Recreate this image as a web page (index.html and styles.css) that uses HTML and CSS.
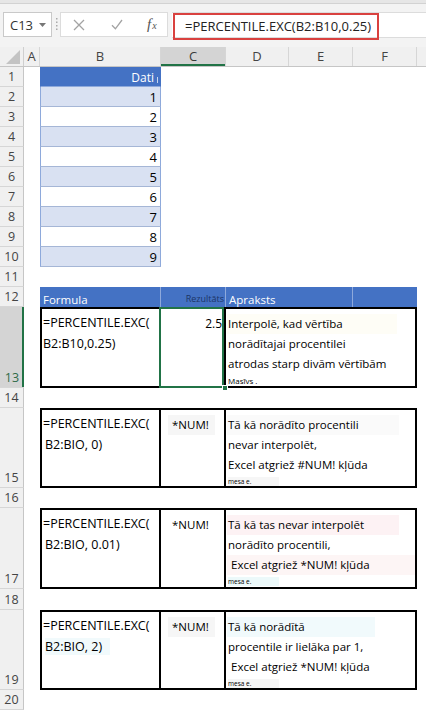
FILE: index.html
```html
<!DOCTYPE html>
<html lang="lv">
<head>
<meta charset="utf-8">
<title>PERCENTILE.EXC</title>
<link rel="stylesheet" href="styles.css">
</head>
<body>
<div class="app">
  <div class="topstrip"></div>
  <div class="fbar">
    <div class="namebox"><span>C13</span><svg class="caret" width="7" height="4" viewBox="0 0 7 4"><path d="M0 0H7L3.5 4Z" fill="#777"/></svg></div>
    <div class="grip"><svg width="3" height="13" viewBox="0 0 3 13"><rect x="1" y="0" width="1.5" height="1.5" fill="#aaa"/><rect x="1" y="3.5" width="1.5" height="1.5" fill="#aaa"/><rect x="1" y="7" width="1.5" height="1.5" fill="#aaa"/><rect x="1" y="10.5" width="1.5" height="1.5" fill="#aaa"/></svg></div>
    <div class="btns">
      <svg class="ico-x" width="12" height="12" viewBox="0 0 12 12"><path d="M1 1L11 11M11 1L1 11" stroke="#a3a3a3" stroke-width="1.3" fill="none"/></svg>
      <svg class="ico-ok" width="12" height="11" viewBox="0 0 12 11"><path d="M1 6.2L4.4 9.8L11 1" stroke="#a3a3a3" stroke-width="1.3" fill="none"/></svg>
      <span class="fx">f<span class="fxx">x</span></span>
    </div>
    <div class="formula"><div class="fbox">=PERCENTILE.EXC(B2:B10,0.25)</div></div>
  </div>

  <div class="sheet">
    <div class="colheads">
      <div class="corner"><svg width="14" height="14" viewBox="0 0 14 14"><path d="M14 0V14H0Z" fill="#c3c3c3"/></svg></div>
      <div class="ch cA">A</div>
      <div class="ch cB">B</div>
      <div class="ch cC sel">C</div>
      <div class="ch cD">D</div>
      <div class="ch cE">E</div>
      <div class="ch cF">F</div>
      <div class="ch cG"></div>
    </div>

    <div class="grid">
      <div class="rowheads">
        <div class="rh">1</div><div class="rh">2</div><div class="rh">3</div><div class="rh">4</div>
        <div class="rh">5</div><div class="rh">6</div><div class="rh">7</div><div class="rh">8</div>
        <div class="rh">9</div><div class="rh">10</div><div class="rh">11</div><div class="rh">12</div>
        <div class="rh h81 selrow">13</div>
        <div class="rh">14</div>
        <div class="rh h80">15</div>
        <div class="rh">16</div>
        <div class="rh h81">17</div>
        <div class="rh h21">18</div>
        <div class="rh h80">19</div>
        <div class="rh">20</div>
      </div>

      <div class="body">
        <div class="row"><div class="cellB head">Dati<span class="fmark"></span></div></div>
        <div class="row"><div class="cellB band">1</div></div>
        <div class="row"><div class="cellB">2</div></div>
        <div class="row"><div class="cellB band">3</div></div>
        <div class="row"><div class="cellB">4</div></div>
        <div class="row"><div class="cellB band">5</div></div>
        <div class="row"><div class="cellB">6</div></div>
        <div class="row"><div class="cellB band">7</div></div>
        <div class="row"><div class="cellB">8</div></div>
        <div class="row"><div class="cellB band">9</div></div>
        <div class="row"></div>
        <div class="row">
          <div class="th thB">Formula</div>
          <div class="th thC">Rezultāts</div>
          <div class="th thD">Apraksts</div>
          <div class="th thE"></div>
          <div class="th thF"></div>
        </div>

        <div class="rec h81">
          <div class="rb"><div>=PERCENTILE.EXC(</div><div>B2:B10,0.25)</div></div>
          <div class="rc selcell"><div class="val">2.5</div><span class="handle"></span></div>
          <div class="rd">
            <div class="ln hl-yel">Interpolē, kad vērtība</div>
            <div class="ln">norādītajai procentilei</div>
            <div class="ln">atrodas starp divām vērtībām</div>
            <div class="tiny t8">Masīvs .</div>
          </div>
        </div>
        <div class="row"></div>

        <div class="rec h80">
          <div class="rb"><div>=PERCENTILE.EXC(</div><div class="ind">B2:BIO, 0)</div></div>
          <div class="rc"><div class="num hl-grey">*NUM!</div></div>
          <div class="rd">
            <div class="ln hl-grey2">Tā kā norādīto procentili</div>
            <div class="ln">nevar interpolēt,</div>
            <div class="ln">Excel atgriež #NUM! kļūda</div>
            <div class="tiny"><span class="hl-grey3">mesa e.</span></div>
          </div>
        </div>
        <div class="row"></div>

        <div class="rec h81">
          <div class="rb"><div>=PERCENTILE.EXC(</div><div class="ind">B2:BIO, 0.01)</div></div>
          <div class="rc"><div class="num">*NUM!</div></div>
          <div class="rd">
            <div class="ln hl-pink">Tā kā tas nevar interpolēt</div>
            <div class="ln">norādīto procentili,</div>
            <div class="ln hl-pink2">&nbsp;Excel atgriež *NUM! kļūda</div>
            <div class="tiny"><span class="hl-cyan">mesa e.</span></div>
          </div>
        </div>
        <div class="row h21"></div>

        <div class="rec h80">
          <div class="rb"><div>=PERCENTILE.EXC(</div><div class="ind"><span class="hl-cyan2">B2:BIO, 2)</span></div></div>
          <div class="rc"><div class="num hl-grey">*NUM!</div></div>
          <div class="rd">
            <div class="ln hl-cyan3">Tā kā norādītā</div>
            <div class="ln">procentile ir lielāka par 1,</div>
            <div class="ln">&nbsp;Excel atgriež *NUM! kļūda</div>
            <div class="tiny"><span class="hl-grey3">mesa e.</span></div>
          </div>
        </div>
        <div class="row"></div>
      </div>
    </div>
  </div>
</div>
</body>
</html>
```

FILE: styles.css
```css
* { box-sizing: border-box; }
html, body { margin: 0; padding: 0; }
body {
  width: 426px;
  height: 710px;
  overflow: hidden;
  background: #fff;
  font-family: "Open Sans", "Noto Sans", sans-serif;
  color: #000;
}

/* ---------- formula bar ---------- */
.topstrip {
  height: 4px;
  background: #e6e6e6;
  border-bottom: 1px solid #d2d2d2;
}
.fbar {
  height: 43px;
  background: #f3f3f3;
  display: flex;
  align-items: flex-start;
  padding: 8px 0 0 3px;
}
.namebox {
  width: 49px;
  height: 25px;
  background: #fff;
  border: 1px solid #c9c9c9;
  display: flex;
  align-items: center;
  padding-left: 6px;
  font-size: 13px;
  color: #333;
}
.namebox .caret { margin-left: 6px; }
.grip {
  width: 8px;
  height: 25px;
  display: flex;
  align-items: center;
  justify-content: center;
}
.btns {
  width: 108px;
  height: 25px;
  background: #fff;
  border: 1px solid #dcdcdc;
  display: flex;
  align-items: center;
  padding-left: 12px;
}
.ico-x { margin-right: 26px; }
.ico-ok { margin-right: 24px; }
.fx {
  font-family: "Liberation Serif", serif;
  font-style: italic;
  font-size: 15px;
  color: #555;
  line-height: 1;
}
.fxx { font-size: 10px; margin-left: 1px; }
.formula {
  flex: 1;
  height: 26px;
  margin-left: 4px;
  background: #fff;
  border-top: 1px solid #dcdcdc;
  border-bottom: 1px solid #dcdcdc;
  display: flex;
  align-items: flex-start;
}
.fbox {
  width: 206px;
  height: 27px;
  margin: 0 0 0 1px;
  border: 2px solid #d9413f;
  padding-left: 10px;
  font-size: 13px;
  line-height: 22px;
  color: #222;
  white-space: nowrap;
}

/* ---------- column headers ---------- */
.colheads {
  display: flex;
  height: 20px;
  background: #f0f0f0;
  border-bottom: 1px solid #c6c6c6;
}
.corner {
  width: 24px;
  border-right: 1px solid #cfcfcf;
  display: flex;
  align-items: flex-end;
  justify-content: flex-end;
  padding: 0 3px 2px 0;
}
.ch {
  border-right: 1px solid #d6d6d6;
  text-align: center;
  font-size: 13px;
  line-height: 19px;
  color: #444;
}
.cA { width: 16px; }
.cB { width: 121px; }
.cC { width: 65px; }
.cD { width: 63px; }
.cE { width: 64px; }
.cF { width: 64px; }
.cG { flex: 1; border-right: none; }
.ch.sel {
  background: #d4d4d4;
  box-shadow: inset 0 -2px 0 #217346;
  color: #3a3a3a;
}

/* ---------- grid area ---------- */
.grid { display: flex; }
.rowheads {
  width: 24px;
  display: flex;
  flex-direction: column;
  background: #f0f0f0;
}
.rh {
  height: 20px;
  border-bottom: 1px solid #d6d6d6;
  border-right: 1px solid #c6c6c6;
  display: flex;
  align-items: flex-end;
  justify-content: center;
  font-size: 12.5px;
  line-height: 19px;
  color: #444;
}
.rh.h80 { height: 80px; }
.rh.h81 { height: 81px; }
.rh.h21 { height: 21px; }
.rh.selrow {
  background: #d4d4d4;
  color: #2f6b48;
  border-right: none;
  box-shadow: inset -2px 0 0 #217346;
}

.body {
  flex: 1;
  display: flex;
  flex-direction: column;
  padding-left: 16px;
}
.row {
  height: 20px;
  display: flex;
}
.row.h21 { height: 21px; }

/* data table B1:B10 */
.cellB {
  width: 121px;
  height: 20px;
  border-left: 1px solid #8ea9db;
  border-right: 1px solid #8ea9db;
  border-bottom: 1px solid #a5b6d6;
  text-align: right;
  padding-right: 3px;
  font-size: 13px;
  line-height: 20px;
  background: #fff;
}
.cellB.band { background: #d9e1f2; }
.cellB.head {
  background: #4472c4;
  color: #fff;
  border-color: #4472c4;
  border-bottom-color: #8ea9db;
  padding-right: 6px;
  font-size: 12px;
  line-height: 22px;
  position: relative;
}
.fmark {
  position: absolute;
  right: 2px;
  top: 10px;
  width: 1px;
  height: 6px;
  background: #c8d5ee;
}

/* table header row 12 */
.th {
  height: 20px;
  background: #4472c4;
  color: #fff;
  font-size: 11.5px;
  line-height: 15px;
  display: flex;
  align-items: flex-end;
  padding-bottom: 0;
}
.thB { width: 121px; padding-left: 3px; border-right: 1px solid #8ea9db; }
.thC {
  width: 65px;
  justify-content: flex-end;
  padding-right: 1px;
  border-right: 1px solid #8ea9db;
  color: #1c3566;
  font-size: 9px;
  line-height: 14px;
  padding-bottom: 1px;
}
.thD { width: 63px; padding-left: 3px; }
.thE { width: 64px; border-right: 1px solid #8ea9db; }
.thF { width: 64px; }

/* record rows */
.rec {
  width: 377px;
  height: 80px;
  border: 2px solid #000;
  display: grid;
  grid-template-columns: 119px 65px 1fr;
}
.rec.h81 { height: 81px; }
.rb {
  border-right: 2px solid #000;
  padding: 3px 0 0 1px;
  font-size: 12.5px;
  line-height: 21px;
  white-space: nowrap;
}
.rb .ind { padding-left: 2px; }
.rc {
  border-right: 2px solid #000;
  font-size: 12px;
  line-height: 20px;
  padding-top: 5px;
  position: relative;
}
.rc .val { text-align: right; padding-right: 2px; }
.rc .num {
  font-size: 11.5px;
  margin-left: 7px;
  padding-left: 4px;
  width: 47px;
}
.selcell::after {
  content: "";
  position: absolute;
  top: -2px;
  left: -2px;
  right: 0;
  bottom: -2px;
  border: 2px solid #217346;
}
.handle {
  position: absolute;
  right: -4px;
  bottom: -5px;
  width: 6px;
  height: 6px;
  background: #217346;
  border: 1px solid #fff;
  z-index: 2;
}
.rd {
  padding: 5px 0 0 1px;
  font-size: 11.5px;
  line-height: 20px;
  white-space: nowrap;
  overflow: hidden;
}
.rd .ln { padding-left: 1px; }
.tiny {
  font-size: 6.5px;
  line-height: 14px;
  padding-left: 1px;
}
.tiny.t8 { font-size: 8px; }

/* faint highlight artefacts of the original */
.hl-yel { background: #fefdf6; width: 170px; }
.hl-grey { background: #f6f6f6; }
.hl-grey2 { background: #fafafa; width: 172px; }
.hl-grey3 { background: #f6f6f6; padding-right: 28px; }
.hl-pink { background: #fdf2f4; width: 172px; }
.hl-pink2 { background: #fdf5f5; width: 188px; }
.hl-cyan { background: #ecf9fa; padding-right: 28px; }
.hl-cyan2 { background: #f1fafc; padding-right: 8px; }
.hl-cyan3 { background: #f1fafc; width: 148px; }
```
